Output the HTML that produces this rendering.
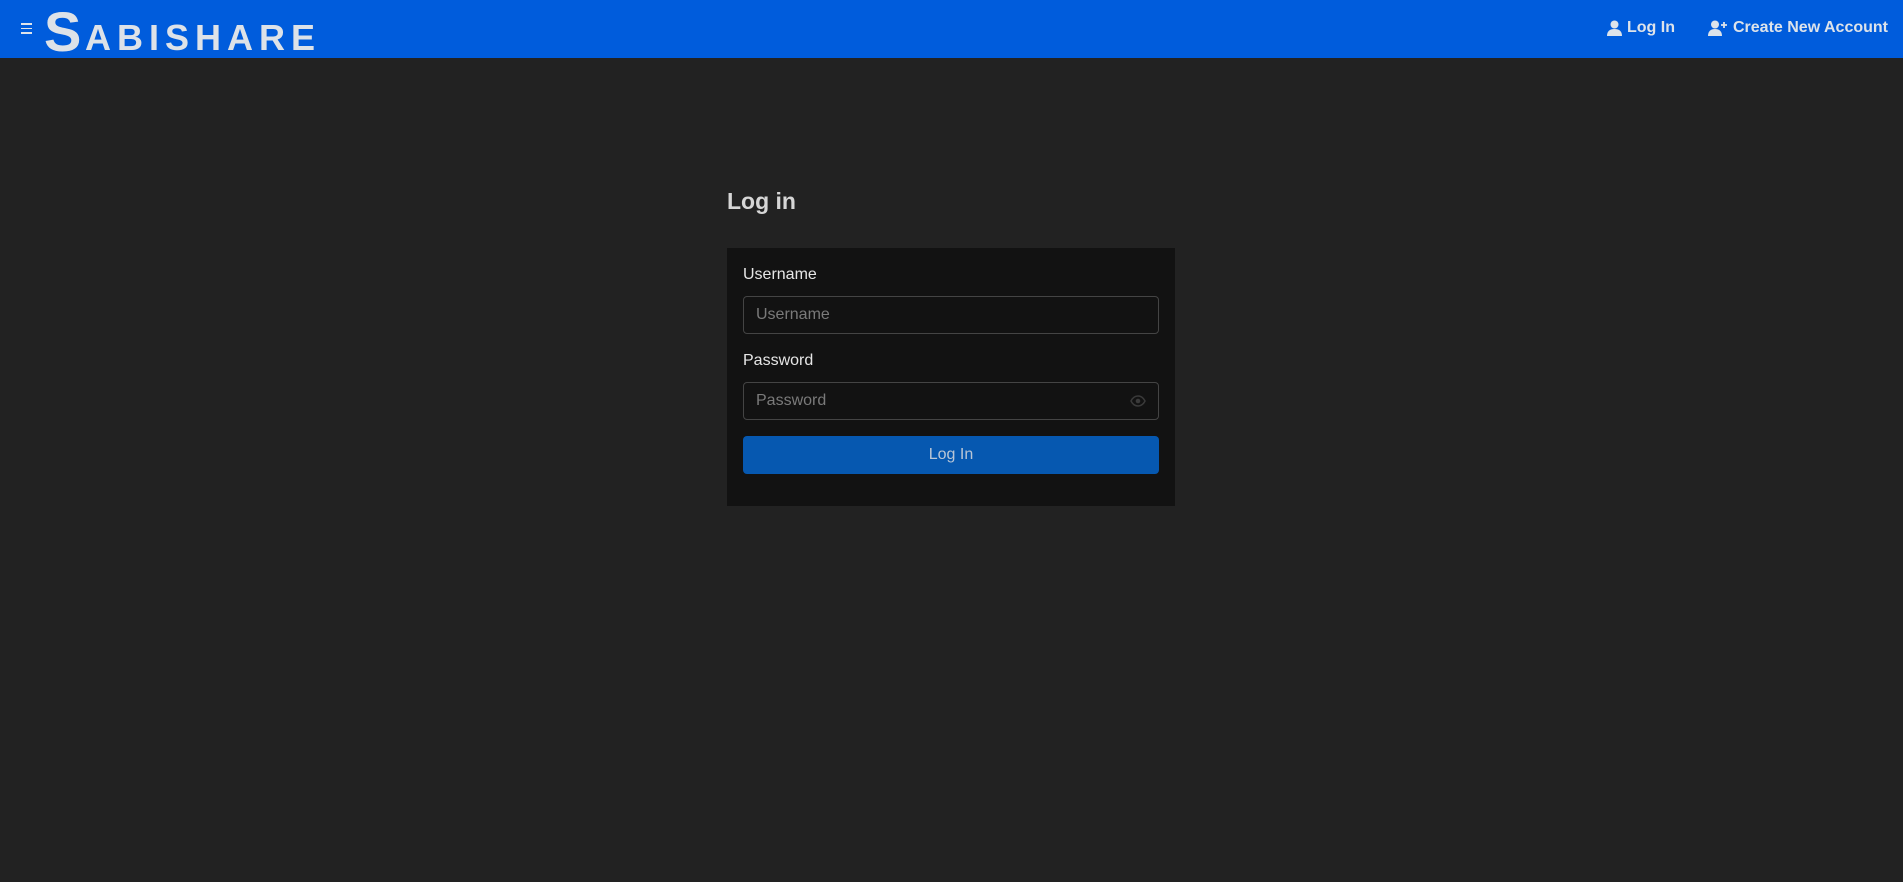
<!DOCTYPE html>
<html><head><meta charset="utf-8"><style>
*{box-sizing:border-box;margin:0;padding:0}
body{width:1903px;height:882px;background:#222222;font-family:"Liberation Sans",sans-serif;overflow:hidden;position:relative}
.hdr{position:absolute;left:0;top:0;width:1903px;height:58px;background:#005cdc}
.ham{position:absolute;left:21px;top:23px;width:11px}
.ham i{display:block;height:1.5px;background:#dfe4ea;margin-bottom:3px}
.logo{position:absolute;left:44px;top:3px;color:#dde2e8;font-weight:bold;white-space:nowrap}
.logo .s{font-size:56px;position:absolute;left:0;top:-4px;letter-spacing:0}
.logo .r{font-size:36px;position:absolute;left:41px;top:14px;letter-spacing:6px}
.nav{position:absolute;top:19px;color:#dde3ea;font-weight:bold;font-size:16px;display:flex;align-items:center}
.nav svg{margin-right:5px}
h1{position:absolute;left:727px;top:188px;color:#d6d6d6;font-size:23px;font-weight:bold}
.card{position:absolute;left:727px;top:248px;width:448px;height:258px;background:#121212}
.lbl{position:absolute;left:16px;color:#e6e6e6;font-size:16px}
.inp{position:absolute;left:16px;width:416px;height:38px;border:1px solid #444;border-radius:4px;color:#7a7a7a;font-size:16px;padding:9px 12px}
.btn{position:absolute;left:16px;top:188px;width:416px;height:38px;background:#0658b0;border-radius:4px;color:#b9c6d6;font-size:16px;text-align:center;line-height:38px}
</style></head><body>
<div class="hdr">
<div class="ham"><i></i><i></i><i></i></div>
<div class="logo"><span class="s">S</span><span class="r">ABISHARE</span></div>
<div class="nav" style="left:1607px"><svg width="15" height="16" viewBox="0 0 15 16"><circle cx="7.5" cy="4.5" r="4" fill="#dde3ea"/><path d="M0 16c0-5 3-7 7.5-7S15 11 15 16z" fill="#dde3ea"/></svg>Log In</div>
<div class="nav" style="left:1708px"><svg width="20" height="16" viewBox="0 0 20 16"><circle cx="7" cy="4.5" r="4" fill="#dde3ea"/><path d="M0 16c0-5 3-7 7-7s7 2 7 7z" fill="#dde3ea"/><path d="M16 2v6M13 5h6" stroke="#dde3ea" stroke-width="1.8"/></svg>Create New Account</div>
</div>
<h1>Log in</h1>
<div class="card">
<div class="lbl" style="top:18px">Username</div>
<div class="inp" style="top:48px">Username</div>
<div class="lbl" style="top:104px">Password</div>
<div class="inp" style="top:134px">Password
<svg style="position:absolute;right:12px;top:12px" width="16" height="12" viewBox="0 0 16 12"><path d="M1 6C3 2 5.5 1 8 1s5 1 7 5c-2 4-4.5 5-7 5S3 10 1 6z" fill="none" stroke="#3a3a3a" stroke-width="1.5"/><circle cx="8" cy="6" r="2.3" fill="#3a3a3a"/></svg></div>
<div class="btn">Log In</div>
</div>
</body></html>
